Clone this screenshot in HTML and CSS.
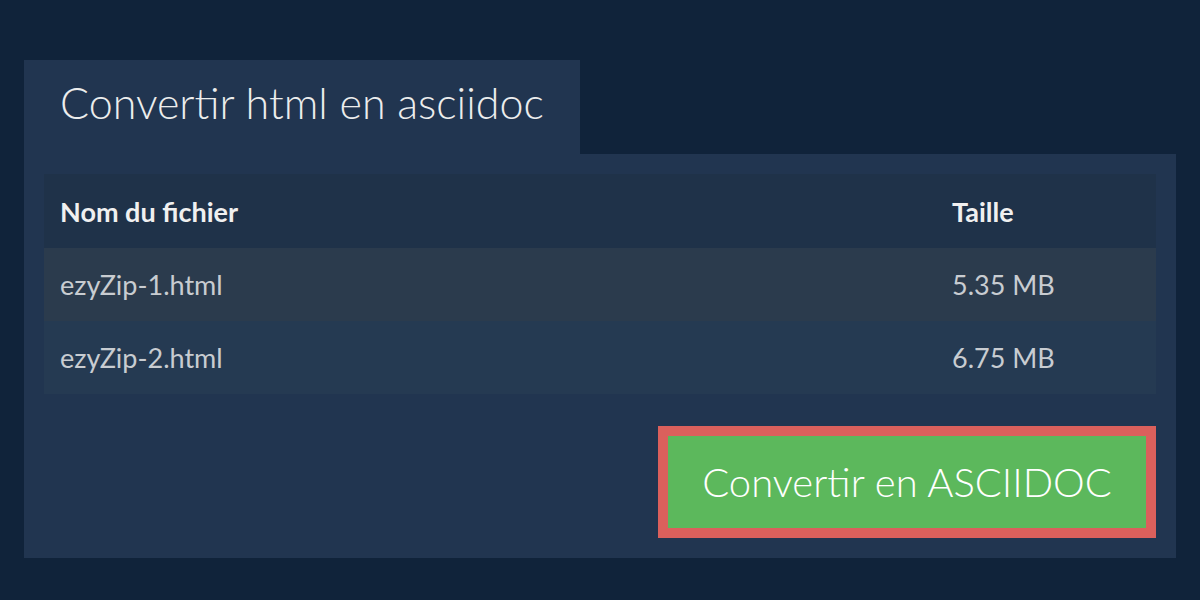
FILE: index.html
```html
<!DOCTYPE html>
<html lang="fr">
<head>
<meta charset="utf-8">
<title>Convertir html en asciidoc</title>
<link rel="stylesheet" href="styles.css">
</head>
<body>
<div class="page">
  <div class="tab"><h1 class="title">Convertir html en asciidoc</h1></div>
  <div class="panel">
    <table class="files">
      <thead>
        <tr><th class="col-name">Nom du fichier</th><th class="col-size">Taille</th></tr>
      </thead>
      <tbody>
        <tr class="odd"><td>ezyZip-1.html</td><td>5.35 MB</td></tr>
        <tr class="even"><td>ezyZip-2.html</td><td>6.75 MB</td></tr>
      </tbody>
    </table>
    <div class="actions">
      <button class="convert">Convertir en ASCIIDOC</button>
    </div>
  </div>
</div>
</body>
</html>
```

FILE: styles.css
```css
html, body {
  margin: 0;
  padding: 0;
  background: #10233a;
  font-family: Lato, "Open Sans", sans-serif;
}
.page {
  padding: 60px 24px 42px 24px;
  width: 1152px;
}
.tab {
  width: 556px;
  height: 94px;
  background: #213550;
  display: flex;
  align-items: center;
  box-sizing: border-box;
  padding-left: 36px;
}
.title {
  margin: 0;
  font-weight: 300;
  font-size: 43px;
  color: #eceded;
  line-height: 1;
  padding-bottom: 10px;
}
.panel {
  background: #213550;
  padding: 20px;
  height: 404px;
  box-sizing: border-box;
}
.files {
  width: 1112px;
  border-collapse: collapse;
  table-layout: fixed;
}
.files th, .files td {
  text-align: left;
  padding: 0 16px;
  font-size: 27px;
}
.files th {
  height: 74px;
  background: #1f3249;
  color: #f0f0f0;
  font-weight: 700;
}
.col-size { width: 188px; }
.files td {
  height: 73px;
  color: #c8ccd1;
  font-weight: 400;
}
.odd td { background: #2b3b4d; }
.even td { background: #253a52; }
.actions {
  display: flex;
  justify-content: flex-end;
  margin-top: 32px;
}
.convert {
  width: 498px;
  height: 112px;
  border: 10px solid #db605c;
  background: #5cb85c;
  color: #ffffff;
  font-family: Lato, "Open Sans", sans-serif;
  font-weight: 300;
  font-size: 40px;
  padding: 0;
  box-sizing: border-box;
}
```
